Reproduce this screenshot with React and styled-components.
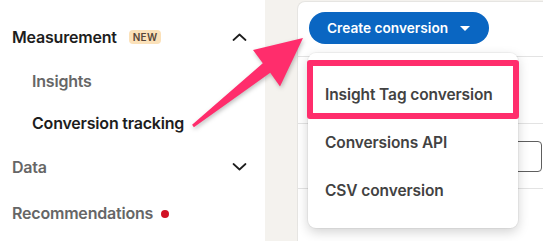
import styled, { createGlobalStyle } from 'styled-components'

const GlobalStyle = createGlobalStyle`
  html, body {
    margin: 0;
    padding: 0;
    background: #ffffff;
  }
  body {
    font-family: Inter, "Noto Sans", "Liberation Sans", sans-serif;
    -webkit-font-smoothing: antialiased;
  }
`

const Page = styled.div`
  position: relative;
  display: flex;
  width: 543px;
  height: 241px;
  overflow: hidden;
  background: #f4f2ee;
`

const Sidebar = styled.nav`
  display: flex;
  flex-direction: column;
  width: 265px;
  flex-shrink: 0;
  padding-top: 14px;
  background: #ffffff;
  box-sizing: border-box;
`

const NavRow = styled.div`
  display: flex;
  align-items: center;
  height: ${props => props.h || 46}px;
  padding-left: ${props => (props.sub ? 32 : 12)}px;
  padding-right: 18px;
  font-size: 16px;
  font-weight: 600;
  letter-spacing: -0.2px;
  color: ${props => (props.active ? '#1d1d1d' : '#666666')};
`

const Label = styled.span`
  white-space: nowrap;
`

const Badge = styled.span`
  margin-left: 12px;
  padding: 0 4px;
  height: 14px;
  line-height: 14px;
  border-radius: 4px;
  background: #fbe1b9;
  color: #56463a;
  font-size: 10px;
  font-weight: 600;
  letter-spacing: 0.3px;
`

const Dot = styled.span`
  width: 8px;
  height: 8px;
  margin-left: 8px;
  margin-top: 2px;
  border-radius: 50%;
  background: #d11124;
`

const Chevron = styled.svg`
  margin-left: auto;
  width: 15px;
  height: 8px;
`

const Gutter = styled.div`
  width: 32px;
  flex-shrink: 0;
`

const Card = styled.main`
  position: relative;
  flex: 1;
  margin-top: 1px;
  background: #ffffff;
  border-left: 1px solid #e6e5e2;
  border-top: 1px solid #e6e5e2;
  border-top-left-radius: 8px;
  display: flex;
  flex-direction: column;
`

const Toolbar = styled.div`
  display: flex;
  align-items: center;
  height: 55px;
  padding-left: 11px;
  border-bottom: 1px solid #e3e3e3;
  box-sizing: border-box;
`

const CreateButton = styled.button`
  display: flex;
  align-items: center;
  gap: 12px;
  height: 32px;
  margin-top: -2px;
  padding: 0 19px 0 18px;
  border: 0;
  border-radius: 16px;
  background: #0a66c2;
  color: #ffffff;
  font-family: inherit;
  font-size: 13.7px;
  font-weight: 600;
  letter-spacing: 0;
  cursor: pointer;
`

const TableRow = styled.div`
  display: flex;
  align-items: center;
  justify-content: flex-end;
  height: ${props => props.h}px;
  padding-right: 1px;
  border-bottom: 1px solid #e3e3e3;
  box-sizing: border-box;
`

const OutlineBox = styled.div`
  width: 110px;
  height: 31px;
  border: 1.5px solid #5e5e5e;
  border-radius: 4px;
  box-sizing: border-box;
`

const Menu = styled.ul`
  position: absolute;
  left: 10px;
  top: 51px;
  width: 210px;
  margin: 0;
  padding: 17px 0 14px;
  list-style: none;
  background: #ffffff;
  border-radius: 8px;
  box-shadow: 0 0 0 1px rgba(0, 0, 0, 0.04), 0 4px 12px rgba(0, 0, 0, 0.18);
`

const MenuItem = styled.li`
  display: flex;
  align-items: center;
  height: 48px;
  padding-left: 17px;
  font-size: 15.5px;
  font-weight: 600;
  letter-spacing: -0.1px;
  color: #424242;
  white-space: nowrap;
`

const Highlight = styled.div`
  position: absolute;
  left: 9px;
  top: 58px;
  width: 212px;
  height: 59px;
  border: 6px solid #ff2d6c;
  border-radius: 3px;
  box-sizing: border-box;
  pointer-events: none;
`

const Arrow = styled.svg`
  position: absolute;
  left: 0;
  top: 0;
  width: 543px;
  height: 241px;
  pointer-events: none;
  filter: drop-shadow(1px 2px 2px rgba(0, 0, 0, 0.25));
`

function ChevronIcon({ up }) {
  return (
    <Chevron viewBox='0 0 15 8'>
      <path
        d={up ? 'M1.5 7 L7.5 1.5 L13.5 7' : 'M1.5 1 L7.5 6.5 L13.5 1'}
        fill='none'
        stroke='#1d1d1d'
        strokeWidth='1.7'
        strokeLinecap='round'
        strokeLinejoin='round'
      />
    </Chevron>
  )
}

export default function App() {
  return (
    <>
      <GlobalStyle />
      <Page>
        <Sidebar>
          <NavRow active>
            <Label>Measurement</Label>
            <Badge>NEW</Badge>
            <ChevronIcon up />
          </NavRow>
          <NavRow sub h={42}>
            <Label>Insights</Label>
          </NavRow>
          <NavRow sub active h={42}>
            <Label>Conversion tracking</Label>
          </NavRow>
          <NavRow>
            <Label>Data</Label>
            <ChevronIcon />
          </NavRow>
          <NavRow>
            <Label>Recommendations</Label>
            <Dot />
          </NavRow>
        </Sidebar>
        <Gutter />
        <Card>
          <Toolbar>
            <CreateButton>
              Create conversion
              <svg width='10' height='5' viewBox='0 0 10 5'>
                <path d='M0 0 L10 0 L5 5 Z' fill='#ffffff' />
              </svg>
            </CreateButton>
          </Toolbar>
          <TableRow h={67} />
          <TableRow h={65}>
            <OutlineBox />
          </TableRow>
          <Menu>
            <MenuItem>Insight Tag conversion</MenuItem>
            <MenuItem>Conversions API</MenuItem>
            <MenuItem>CSV conversion</MenuItem>
          </Menu>
          <Highlight />
        </Card>
        <Arrow viewBox='0 0 543 241'>
          <polygon
            points='192.1,124.8 193.9,127.2 270.2,72.7 280,86.5 303,38 253,50 262.8,63.3'
            fill='#ff2d6c'
            strokeLinejoin='round'
          />
        </Arrow>
      </Page>
    </>
  )
}
